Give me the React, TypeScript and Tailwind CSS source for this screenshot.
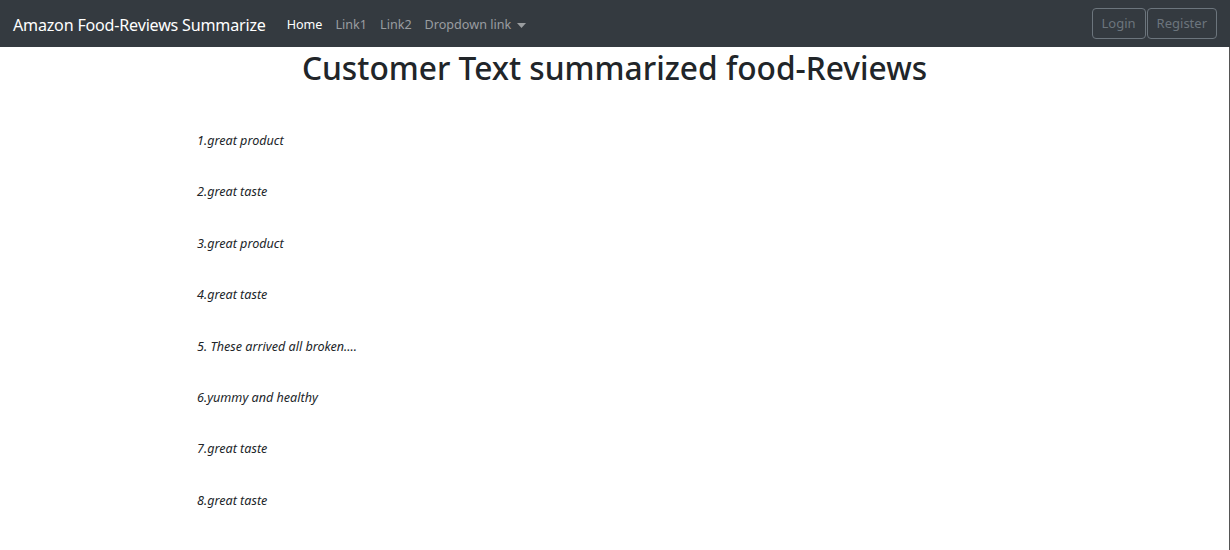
import React from "react";

const reviews = [
  "1.great product",
  "2.great taste",
  "3.great product",
  "4.great taste",
  "5. These arrived all broken....",
  "6.yummy and healthy",
  "7.great taste",
  "8.great taste",
];

export default function App() {
  return (
    <div className="w-[1230px] h-[550px] bg-white overflow-hidden flex flex-col" style={{ fontFamily: '"Noto Sans", "Open Sans", sans-serif' }}>
      <nav className="h-[47px] bg-[#343a40] flex items-center pl-[13px] pr-[13px] shrink-0">
        <span className="text-white text-[16.1px] tracking-[-0.2px] mr-[21px] pt-[3px]">Amazon Food-Reviews Summarize</span>
        <div className="flex items-center gap-[13px] text-[12.6px] pt-[3px]">
          <span className="text-white">Home</span>
          <span className="text-[#9a9da0]">Link1</span>
          <span className="text-[#9a9da0]">Link2</span>
          <span className="text-[#9a9da0] flex items-center">
            Dropdown link
            <svg width="9" height="5" viewBox="0 0 9 5" className="ml-[6px] mt-[1px]"><path d="M0 0h9L4.5 5z" fill="#9a9da0" /></svg>
          </span>
        </div>
        <div className="ml-auto flex items-center">
          <button className="h-[31px] px-[9px] pt-[1px] border border-[#6c757d] rounded-[4px] text-[#6c757d] text-[13px]">Login</button>
          <button className="h-[31px] px-[9px] pt-[1px] border border-[#6c757d] rounded-[4px] text-[#6c757d] text-[13px] ml-[1px]">Register</button>
        </div>
      </nav>
      <div className="flex-1 border-r border-[#555] flex flex-col">
        <h1 className="text-center text-[#212529] text-[31.7px] font-medium leading-[42px] mt-[0px]">Customer Text summarized food-Reviews</h1>
        <ul className="pl-[197px] mt-[43px] flex flex-col">
          {reviews.map((r) => (
            <li key={r} className="italic text-[#212529] text-[12.6px] h-[51.4px] leading-[18px]">{r}</li>
          ))}
        </ul>
      </div>
    </div>
  );
}
